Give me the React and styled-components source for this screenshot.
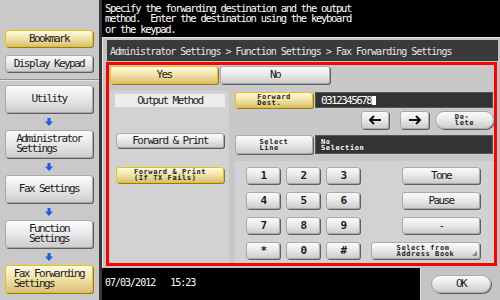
import styled, { createGlobalStyle, css } from 'styled-components';

const GlobalStyle = createGlobalStyle`
  html, body { margin: 0; padding: 0; background: #000; }
  #root { width: 500px; height: 300px; }
`;

const Screen = styled.div`
  display: flex;
  width: 500px;
  height: 300px;
  overflow: hidden;
  background: #000;
  font-family: "DejaVu Sans Mono", "Liberation Mono", monospace;
  font-size: 11px;
  letter-spacing: -1.6px;
  color: #1c1c1c;
`;

const Sidebar = styled.div`
  flex: none;
  width: 99px;
  border-right: 3px solid #383838;
  background: #c9c9c9;
  display: flex;
  flex-direction: column;
`;

const QuickGroup = styled.div`
  display: flex;
  flex-direction: column;
  gap: 8px;
  padding: 30px 0 7px 5px;
  border-bottom: 1px solid #8e8e8e;
  box-shadow: 0 1px 0 #e2e2e2;
`;

const StepGroup = styled.div`
  display: flex;
  flex-direction: column;
  padding: 5px 0 0 5px;
`;

const Key = styled.div`
  box-sizing: border-box;
  position: relative;
  flex: none;
  display: flex;
  align-items: center;
  justify-content: center;
  width: ${p => p.$w}px;
  height: ${p => p.$h}px;
  border-radius: ${p => (p.$round ? '9px' : '3px')};
  text-align: left;
  line-height: 10px;
  white-space: pre;
  font-weight: ${p => (p.$bold ? 'bold' : 'normal')};
  background: linear-gradient(#fbfbfb, #e8e8e8 50%, #cdcdcd);
  border: 1px solid #a9a9a9;
  box-shadow: 1px 1px 0 #5e5e5e;
  ${p => p.$on && css`
    background: linear-gradient(#fffbe8, #f1e2a4 50%, #d8c27c);
    border-color: #f0c200;
    box-shadow: 1px 1px 0 #8a7c38;
  `}
  ${p => p.$small && css`
    font-size: 7px;
    line-height: 6px;
    letter-spacing: 0.6px;
    font-weight: bold;
  `}
  ${p => p.$more && css`
    &::after {
      content: "";
      position: absolute;
      right: 2px;
      bottom: 2px;
      border-left: 5px solid transparent;
      border-bottom: 5px solid #8a8a8a;
    }
  `}
`;

const StepArrow = styled.div`
  width: 88px;
  height: 17px;
  display: flex;
  align-items: center;
  justify-content: center;
`;

const Main = styled.div`
  flex: none;
  width: 398px;
  display: flex;
  flex-direction: column;
`;

const Message = styled.div`
  height: 37px;
  box-sizing: border-box;
  padding: 3px 0 0 3px;
  color: #fff;
  font-size: 10.5px;
  line-height: 10.3px;
  letter-spacing: -1.3px;
  white-space: pre;
`;

const Panel = styled.div`
  height: 231px;
  box-sizing: border-box;
  padding: 2px 2px 0 4px;
  background: #c4c4c4;
  border-left: 1px solid #e4e4e4;
  border-top: 1px solid #e4e4e4;
`;

const Crumbs = styled.div`
  height: 21px;
  box-sizing: border-box;
  padding: 6px 0 0 3px;
  background: #3a3a3a;
  color: #e6e6e6;
  font-size: 10px;
  letter-spacing: -1px;
  white-space: pre;
`;

const Frame = styled.div`
  box-sizing: border-box;
  height: 204px;
  margin: 1px 1px 0 -1px;
  padding: 1px 0 0 1px;
  border: 3px solid #ff0000;
  background: #c8c8c8;
  display: flex;
  flex-direction: column;
`;

const ChoiceRow = styled.div`
  display: flex;
  gap: 2px;
`;

const Body = styled.div`
  flex: 1;
  display: flex;
  margin-top: 7px;
`;

const MethodColumn = styled.div`
  width: 119px;
  display: flex;
  flex-direction: column;
  padding-top: 3px;
  background: #d2d2d2;
`;

const MethodLabel = styled.div`
  width: 110px;
  height: 13px;
  margin-left: 5px;
  margin-bottom: 26px;
  display: flex;
  align-items: center;
  justify-content: center;
  background: #ededed;
`;

const MethodKey = styled(Key)`
  margin: 0 0 ${p => p.$gap || 0}px 6px;
`;

const DestColumn = styled.div`
  width: 259px;
  margin-left: 6px;
  display: flex;
  flex-direction: column;
`;

const FieldRow = styled.div`
  display: flex;
  gap: 2px;
  margin-top: ${p => p.$top}px;
`;

const Field = styled.div`
  box-sizing: border-box;
  width: 178px;
  height: ${p => p.$h}px;
  display: flex;
  align-items: center;
  padding-left: 5px;
  background: #333;
  border: 1px solid #555;
  color: #fff;
  white-space: pre;
  ${p => p.$small && css`
    font-size: 7px;
    line-height: 6px;
    letter-spacing: 0.6px;
    font-weight: bold;
  `}
`;

const Cursor = styled.span`
  display: inline-block;
  width: 4px;
  height: 9px;
  margin-left: 1px;
  background: #fff;
`;

const CursorRow = styled.div`
  display: flex;
  justify-content: flex-end;
  margin-top: 3px;
`;

const Keypad = styled.div`
  flex: 1;
  margin-top: 7px;
  padding: 6px 14px 0 11px;
  display: flex;
  flex-direction: column;
  gap: 8px;
  background: #d2d2d2;
`;

const KeyRow = styled.div`
  display: flex;
  gap: 6px;
`;

const SideKey = styled(Key)`
  margin-left: auto;
`;

const Bottom = styled.div`
  flex: 1;
  display: flex;
`;

const Status = styled.div`
  flex: 1;
  padding: 0 0 4px 3px;
  display: flex;
  align-items: center;
  color: #fff;
  font-size: 10px;
  letter-spacing: -1px;
  white-space: pre;
`;

const OkTab = styled.div`
  width: 80px;
  box-sizing: border-box;
  padding: 7px 0 0 10px;
  background: #c4c4c4;
  border-left: 1px solid #e4e4e4;
`;

function DownArrow() {
  return (
    <svg width="8" height="8" viewBox="0 0 8 8">
      <rect x="2.5" y="0" width="3" height="4" fill="#1a5ee8" />
      <polygon points="0,3.5 8,3.5 4,8" fill="#1a5ee8" />
    </svg>
  );
}

const steps = [
  { label: 'Utility' },
  { label: 'Administrator\nSettings' },
  { label: 'Fax Settings' },
  { label: 'Function\nSettings' },
  { label: 'Fax Forwarding\nSettings', on: true },
];

const keyRows = [
  { keys: ['1', '2', '3'], side: 'Tone' },
  { keys: ['4', '5', '6'], side: 'Pause' },
  { keys: ['7', '8', '9'], side: '-' },
  { keys: ['*', '0', '#'], side: 'Select from\nAddress Book', wide: true },
];

export default function App() {
  return (
    <Screen>
      <GlobalStyle />
      <Sidebar>
        <QuickGroup>
          <Key $w={88} $h={17} $on>Bookmark</Key>
          <Key $w={88} $h={17}>Display Keypad</Key>
        </QuickGroup>
        <StepGroup>
          {steps.map((s, i) => (
            <div key={s.label}>
              {i > 0 && <StepArrow><DownArrow /></StepArrow>}
              <Key $w={88} $h={28} $on={s.on}>{s.label}</Key>
            </div>
          ))}
        </StepGroup>
      </Sidebar>
      <Main>
        <Message>
          {'Specify the forwarding destination and the output\nmethod.  Enter the destination using the keyboard\nor the keypad.'}
        </Message>
        <Panel>
          <Crumbs>Administrator Settings {'>'} Function Settings {'>'} Fax Forwarding Settings</Crumbs>
          <Frame>
            <ChoiceRow>
              <Key $w={108} $h={18} $on>Yes</Key>
              <Key $w={110} $h={18}>No</Key>
            </ChoiceRow>
            <Body>
              <MethodColumn>
                <MethodLabel>Output Method</MethodLabel>
                <MethodKey $w={108} $h={15} $gap={19}>Forward &amp; Print</MethodKey>
                <MethodKey $w={108} $h={16} $on $small>{'Forward & Print\n(If TX Fails)'}</MethodKey>
              </MethodColumn>
              <DestColumn>
                <FieldRow $top={1}>
                  <Key $w={78} $h={16} $on $small>{'Forward\nDest.'}</Key>
                  <Field $h={16}>0312345678<Cursor /></Field>
                </FieldRow>
                <CursorRow>
                  <Key $w={28} $h={18} style={{ marginRight: 11 }}>
                    <svg width="14" height="10" viewBox="0 0 14 10"><path d="M13 5H2M6 1L2 5l4 4" stroke="#111" strokeWidth="2" fill="none" /></svg>
                  </Key>
                  <Key $w={29} $h={18} style={{ marginRight: 6 }}>
                    <svg width="14" height="10" viewBox="0 0 14 10"><path d="M1 5h11M8 1l4 4-4 4" stroke="#111" strokeWidth="2" fill="none" /></svg>
                  </Key>
                  <Key $w={59} $h={18} $round $small>{'De-\nlete'}</Key>
                </CursorRow>
                <FieldRow $top={6}>
                  <Key $w={78} $h={19} $small>{'Select\nLine'}</Key>
                  <Field $h={19} $small>{'No\nSelection'}</Field>
                </FieldRow>
                <Keypad>
                  {keyRows.map(r => (
                    <KeyRow key={r.side}>
                      {r.keys.map(k => (
                        <Key key={k} $w={34} $h={17} $bold>{k}</Key>
                      ))}
                      <SideKey $w={r.wide ? 109 : 78} $h={17} $small={r.wide} $more={r.wide}>{r.side}</SideKey>
                    </KeyRow>
                  ))}
                </Keypad>
              </DestColumn>
            </Body>
          </Frame>
        </Panel>
        <Bottom>
          <Status>{'07/03/2012   15:23'}</Status>
          <OkTab>
            <Key $w={60} $h={18} $round>OK</Key>
          </OkTab>
        </Bottom>
      </Main>
    </Screen>
  );
}
